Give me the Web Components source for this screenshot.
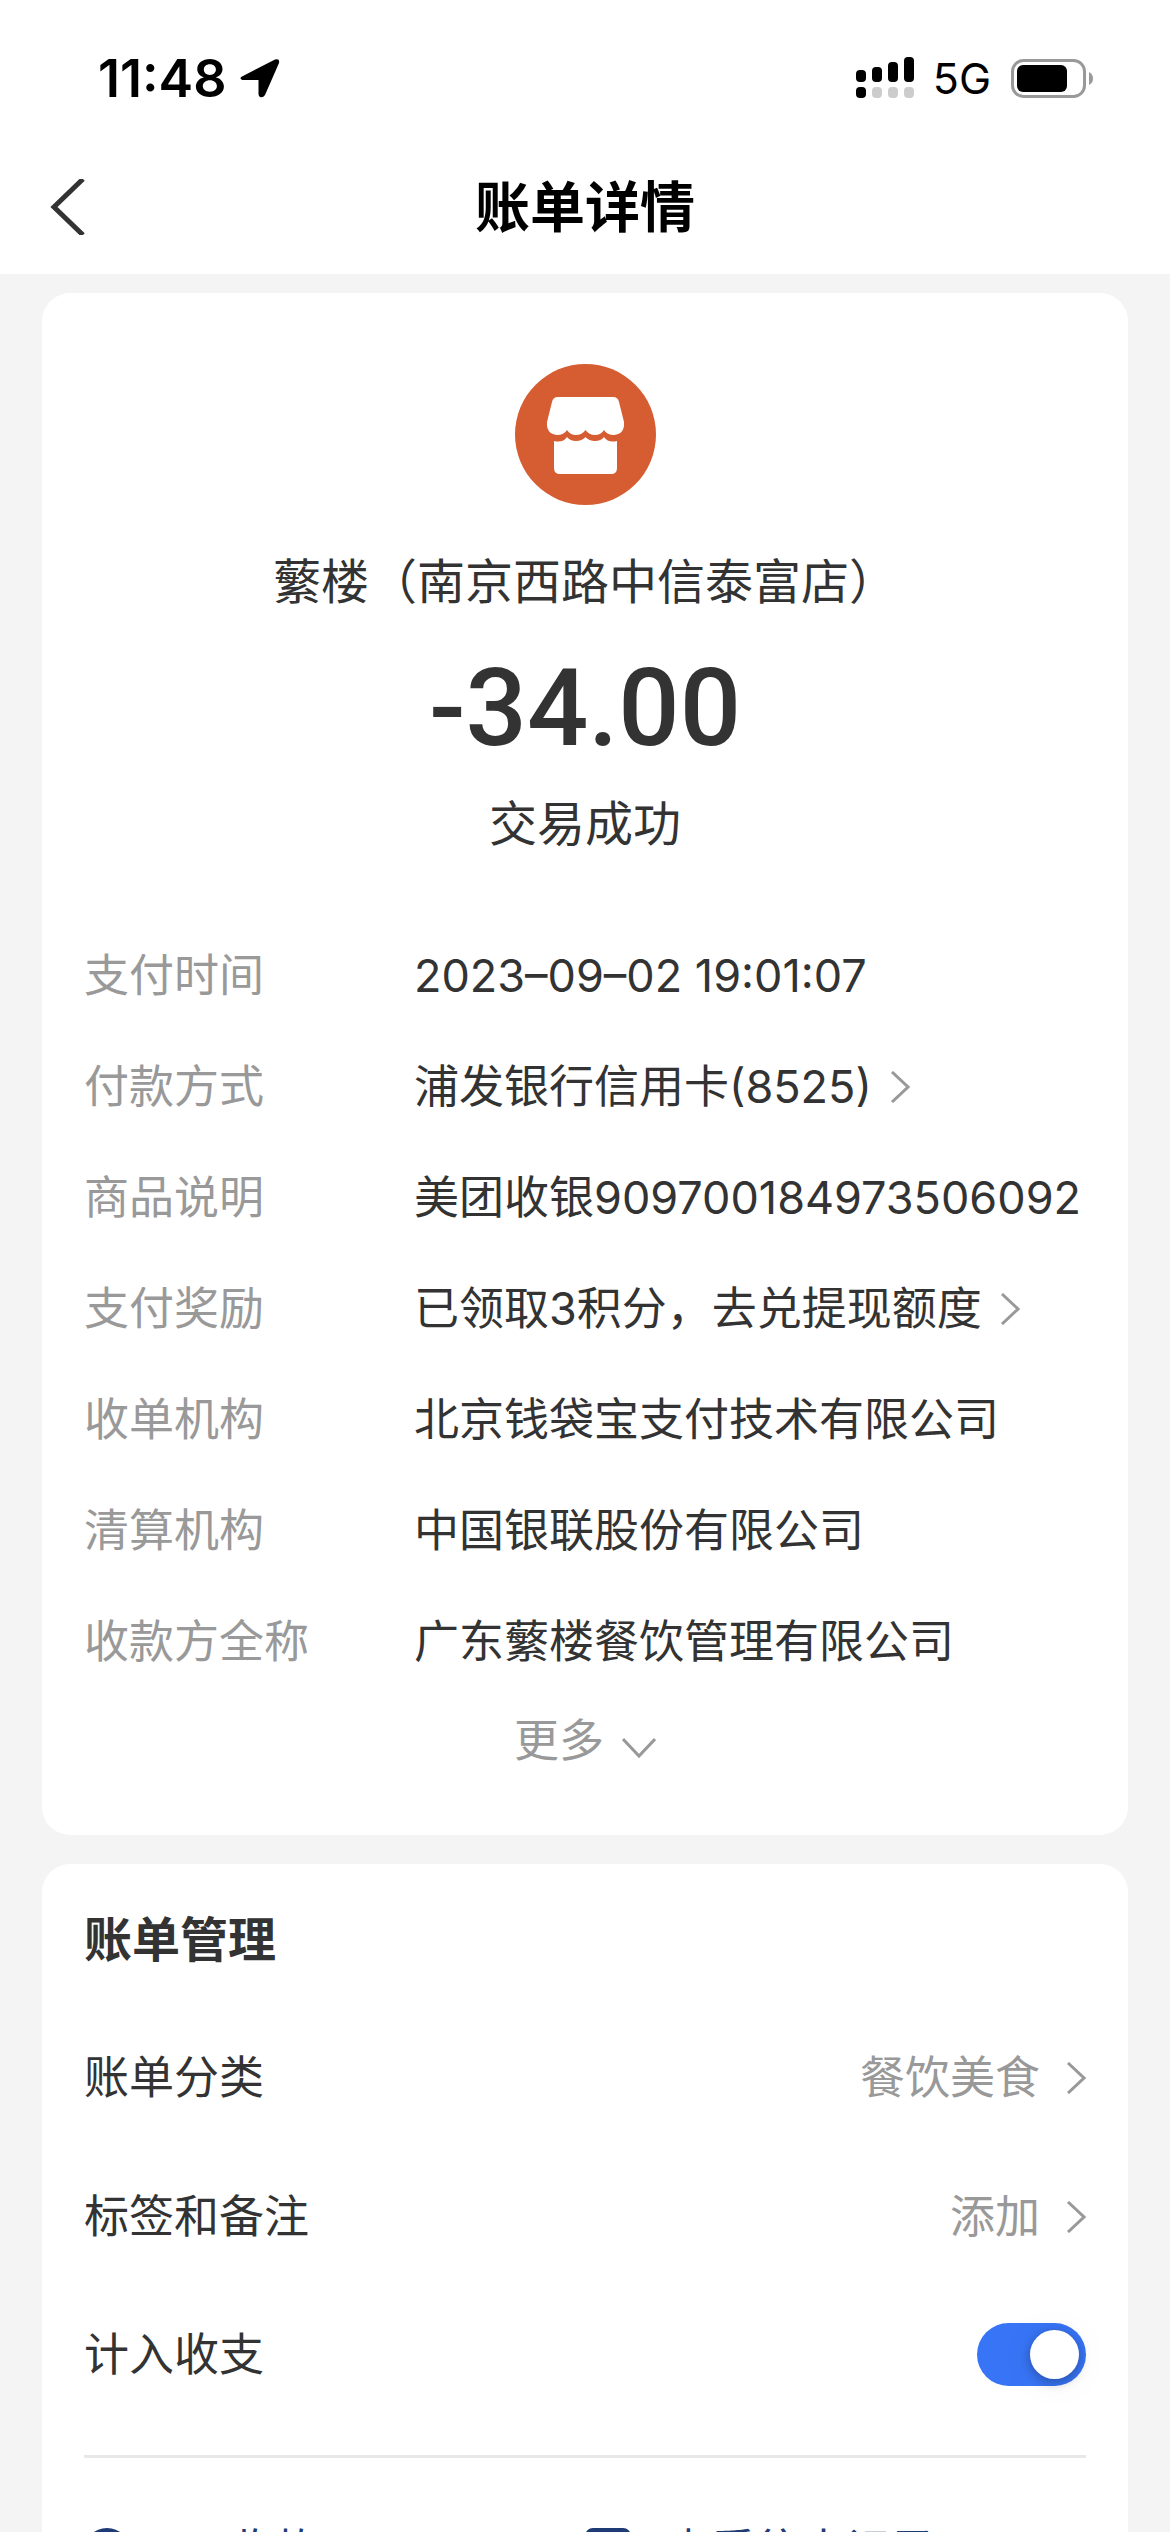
<!DOCTYPE html>
<html lang="zh-CN">
<head>
<meta charset="UTF-8">
<meta name="viewport" content="width=device-width, initial-scale=1">
<title>账单详情</title>
<style>
    body {
        margin: 0;
        background: #f4f4f4;
        color: #333;
        font-family: Inter, "Noto Sans CJK SC", sans-serif;
        font-size: 45px;
        line-height: 63px;
    }
</style>
</head>
<body>

<status-bar time="11:48" network="5G"></status-bar>
<nav-bar>账单详情</nav-bar>

<main>
    <bill-card>
        <bill-summary amount="-34.00" status="交易成功">蘩楼（南京西路中信泰富店）</bill-summary>
        <detail-row label="支付时间">2023–09–02 19:01:07</detail-row>
        <detail-row label="付款方式" link>浦发银行信用卡(8525)</detail-row>
        <detail-row label="商品说明">美团收银909700184973506092</detail-row>
        <detail-row label="支付奖励" link>已领取3积分，去兑提现额度</detail-row>
        <detail-row label="收单机构">北京钱袋宝支付技术有限公司</detail-row>
        <detail-row label="清算机构">中国银联股份有限公司</detail-row>
        <detail-row label="收款方全称">广东蘩楼餐饮管理有限公司</detail-row>
        <more-button>更多</more-button>
    </bill-card>

    <bill-card class="manage">
        <card-title>账单管理</card-title>
        <setting-row label="账单分类">餐饮美食</setting-row>
        <setting-row label="标签和备注">添加</setting-row>
        <switch-row label="计入收支" checked></switch-row>
        <action-list>
            <action-link icon="coin">AA收款</action-link>
            <action-link icon="record">查看往来记录</action-link>
        </action-list>
    </bill-card>
</main>

<script>
const chevron = `
    <svg class="chevron" width="20" height="32" viewBox="0 0 20 32" fill="none" stroke="#999" stroke-width="3" aria-hidden="true">
        <path d="M2 1 L18 16 L2 31"/>
    </svg>
`

class StatusBar extends HTMLElement {
    constructor() {
        super();
        this.shadow = this.attachShadow({ mode: 'open' })
    }

    connectedCallback() {
        const style = `
            :host {
                display: flex;
                align-items: center;
                justify-content: space-between;
                height: 156px;
                padding: 0 76px 0 98px;
                background: white;
                color: black;
            }

            .side {
                display: flex;
                align-items: center;
            }

            .time {
                font-size: 52px;
                font-weight: 600;
                margin-right: 14px;
            }

            .network {
                font-size: 43px;
                font-weight: 400;
                margin: 0 20px 0 18px;
            }

            svg {
                display: block;
            }
        `

        this.shadow.innerHTML = `
            <style>${style}</style>
            <div class="side">
                <span class="time">${this.getAttribute('time')}</span>
                <svg width="40" height="40" viewBox="0 0 40 40" aria-hidden="true">
                    <path d="M3 18 L35 1.5 Q40 0 39 5 L25 37 Q23 40 20 39 Q18.500 38 18.500 36 L18.500 22 L4 22 Q0.500 22 0.500 20 Q0.500 19 3 18 Z"/>
                </svg>
            </div>
            <div class="side">
                <svg width="59" height="42" viewBox="0 0 59 42" aria-hidden="true">
                    <rect x="0" y="13" width="10" height="12" rx="4"/>
                    <rect x="16" y="10" width="10" height="15" rx="4"/>
                    <rect x="32" y="5" width="10" height="20" rx="4"/>
                    <rect x="48" y="0" width="10" height="25" rx="4"/>
                    <rect x="0" y="30" width="10" height="11" rx="4"/>
                    <g fill="#ccc">
                        <rect x="16" y="30" width="10" height="11" rx="4"/>
                        <rect x="32" y="30" width="10" height="11" rx="4"/>
                        <rect x="48" y="30" width="10" height="11" rx="4"/>
                    </g>
                </svg>
                <span class="network">${this.getAttribute('network')}</span>
                <svg width="83" height="39" viewBox="0 0 83 39" aria-hidden="true">
                    <rect x="1.500" y="1.500" width="72" height="36" rx="11" fill="none" stroke="#999" stroke-width="3"/>
                    <rect x="6" y="6" width="50" height="27" rx="6"/>
                    <path d="M78 13 Q82 15 82 19.500 Q82 24 78 26 Z" fill="#999"/>
                </svg>
            </div>
        `;
    }
}

class NavBar extends HTMLElement {
    constructor() {
        super();
        this.shadow = this.attachShadow({ mode: 'open' })
    }

    connectedCallback() {
        const style = `
            :host {
                display: grid;
                grid-template-columns: 1fr auto 1fr;
                align-items: center;
                height: 102px;
                padding: 0 48px 16px;
                background: white;
                color: black;
            }

            button {
                justify-self: start;
                padding: 0;
                border: 0;
                background: none;
                cursor: pointer;
            }

            svg {
                display: block;
            }

            h1 {
                margin: 0;
                font-size: 55px;
                font-weight: 600;
                line-height: 72px;
            }
        `

        this.shadow.innerHTML = `
            <style>${style}</style>
            <button type="button" aria-label="返回">
                <svg width="40" height="56" viewBox="0 0 40 56" fill="none" stroke="#333" stroke-width="5">
                    <path d="M35 0 L6 28 L35 56"/>
                </svg>
            </button>
            <h1><slot></slot></h1>
        `;
    }
}

class BillCard extends HTMLElement {
    constructor() {
        super();
        this.shadow = this.attachShadow({ mode: 'open' })
    }

    connectedCallback() {
        const style = `
            :host {
                display: flex;
                flex-direction: column;
                margin: 19px 42px 29px;
                padding: 71px 42px 63px;
                border-radius: 28px;
                background: white;
            }

            :host(.manage) {
                padding-top: 40px;
            }
        `

        this.shadow.innerHTML = `
            <style>${style}</style>
            <slot></slot>
        `;
    }
}

class BillSummary extends HTMLElement {
    constructor() {
        super();
        this.shadow = this.attachShadow({ mode: 'open' })
    }

    connectedCallback() {
        const style = `
            :host {
                display: flex;
                flex-direction: column;
                align-items: center;
                margin-bottom: 84px;
                font-size: 48px;
                line-height: 72px;
            }

            .shop {
                margin-top: 41px;
            }

            .amount {
                margin: 30px 0 20px;
                font-family: Roboto, sans-serif;
                font-size: 108px;
                font-weight: 500;
                line-height: 120px;
            }

            svg {
                display: block;
            }
        `

        this.shadow.innerHTML = `
            <style>${style}</style>
            <svg width="141" height="141" viewBox="0 0 141 141" fill="white" aria-hidden="true">
                <circle cx="70.500" cy="70.500" r="70.500" fill="#d65d32"/>
                <path d="M43 33 H98 Q103 33 104 38 L109 58 Q110 70 99 71 Q92 71 89 66 Q86 71 80 71 Q74 71 70.500 66 Q67 71 61 71 Q55 71 52 66 Q49 71 42 71 Q31 70 32 58 L37 38 Q38 33 43 33 Z"/>
                <path d="M39 77 Q48 79 52 73 Q55 77 61 77 Q67 77 70.500 73 Q74 77 80 77 Q86 77 89 73 Q93 79 102 77 V104 Q102 110 96 110 H45 Q39 110 39 104 Z"/>
            </svg>
            <div class="shop"><slot></slot></div>
            <div class="amount">${this.getAttribute('amount')}</div>
            <div>${this.getAttribute('status')}</div>
        `;
    }
}

class DetailRow extends HTMLElement {
    constructor() {
        super();
        this.shadow = this.attachShadow({ mode: 'open' })
    }

    connectedCallback() {
        const style = `
            :host {
                display: grid;
                grid-template-columns: 330px 1fr;
                margin-bottom: 48px;
            }

            .label {
                color: #999;
            }

            .value {
                display: flex;
                align-items: center;
                gap: 18px;
                color: inherit;
                text-decoration: none;
                white-space: nowrap;
            }
        `
        const value = this.hasAttribute('link')
            ? `<a class="value" href="#"><slot></slot>${chevron}</a>`
            : `<span class="value"><slot></slot></span>`

        this.shadow.innerHTML = `
            <style>${style}</style>
            <span class="label">${this.getAttribute('label')}</span>
            ${value}
        `;
    }
}

class MoreButton extends HTMLElement {
    constructor() {
        super();
        this.shadow = this.attachShadow({ mode: 'open' })
    }

    connectedCallback() {
        const style = `
            :host {
                display: flex;
                justify-content: center;
                margin-top: -12px;
            }

            button {
                display: flex;
                align-items: center;
                gap: 18px;
                padding: 0;
                border: 0;
                background: none;
                color: #999;
                font: inherit;
                cursor: pointer;
            }

            svg {
                margin-top: 14px;
            }
        `

        this.shadow.innerHTML = `
            <style>${style}</style>
            <button type="button">
                <slot></slot>
                <svg width="34" height="22" viewBox="0 0 34 22" fill="none" stroke="#999" stroke-width="3" aria-hidden="true">
                    <path d="M1 2 L17 19 L33 2"/>
                </svg>
            </button>
        `;
    }
}

class CardTitle extends HTMLElement {
    constructor() {
        super();
        this.shadow = this.attachShadow({ mode: 'open' })
    }

    connectedCallback() {
        const style = `
            :host {
                display: block;
                margin-bottom: 32px;
            }

            h2 {
                margin: 0;
                font-size: 48px;
                font-weight: 700;
                line-height: 72px;
            }
        `

        this.shadow.innerHTML = `
            <style>${style}</style>
            <h2><slot></slot></h2>
        `;
    }
}

class SettingRow extends HTMLElement {
    constructor() {
        super();
        this.shadow = this.attachShadow({ mode: 'open' })
    }

    connectedCallback() {
        const style = `
            :host {
                display: block;
            }

            a {
                display: flex;
                align-items: center;
                height: 139px;
                color: inherit;
                text-decoration: none;
            }

            .value {
                margin: 0 26px 0 auto;
                color: #999;
            }
        `

        this.shadow.innerHTML = `
            <style>${style}</style>
            <a href="#">
                <span>${this.getAttribute('label')}</span>
                <span class="value"><slot></slot></span>
                ${chevron}
            </a>
        `;
    }
}

class SwitchRow extends HTMLElement {
    constructor() {
        super();
        this.shadow = this.attachShadow({ mode: 'open' })
    }

    connectedCallback() {
        const style = `
            :host {
                display: flex;
                align-items: center;
                justify-content: space-between;
                height: 137px;
            }

            input {
                appearance: none;
                display: flex;
                align-items: center;
                width: 109px;
                height: 63px;
                margin: 0;
                padding: 0 7px;
                box-sizing: border-box;
                border-radius: 32px;
                background: #ddd;
                cursor: pointer;
            }

            input::before {
                content: '';
                width: 49px;
                height: 49px;
                border-radius: 50%;
                background: white;
                box-shadow: 0 3px 12px rgba(0, 0, 0, 0.3), 0 3px 40px rgba(0, 0, 0, 0.05);
            }

            input:checked {
                justify-content: flex-end;
                background: #3875f6;
            }
        `

        this.shadow.innerHTML = `
            <style>${style}</style>
            <label for="toggle">${this.getAttribute('label')}</label>
            <input id="toggle" type="checkbox" role="switch" ${this.hasAttribute('checked') ? 'checked' : ''}>
        `;
    }
}

class ActionList extends HTMLElement {
    constructor() {
        super();
        this.shadow = this.attachShadow({ mode: 'open' })
    }

    connectedCallback() {
        const style = `
            :host {
                display: grid;
                grid-template-columns: 1fr 1fr;
                margin-top: 32px;
                padding-top: 61px;
                border-top: 3px solid #e8e8e8;
            }
        `

        this.shadow.innerHTML = `
            <style>${style}</style>
            <slot></slot>
        `;
    }
}

class ActionLink extends HTMLElement {
    constructor() {
        super();
        this.shadow = this.attachShadow({ mode: 'open' })
    }

    connectedCallback() {
        const icons = {
            coin: `
                <circle cx="23" cy="23" r="21"/>
                <path d="M14 12 L23 22 L32 12 M23 22 V36 M14 23 H32 M14 30 H32"/>
            `,
            record: `
                <rect x="2" y="2" width="42" height="42" rx="6"/>
                <path d="M12 15 H34 M12 24 H34 M12 33 H25"/>
            `
        }
        const style = `
            :host {
                display: block;
            }

            a {
                display: flex;
                align-items: center;
                gap: 35px;
                color: #1f3b76;
                text-decoration: none;
            }
        `

        this.shadow.innerHTML = `
            <style>${style}</style>
            <a href="#">
                <svg width="46" height="46" viewBox="0 0 46 46" fill="none" stroke="currentColor" stroke-width="4" aria-hidden="true">
                    ${icons[this.getAttribute('icon')]}
                </svg>
                <slot></slot>
            </a>
        `;
    }
}

customElements.define('status-bar', StatusBar);
customElements.define('nav-bar', NavBar);
customElements.define('bill-card', BillCard);
customElements.define('bill-summary', BillSummary);
customElements.define('detail-row', DetailRow);
customElements.define('more-button', MoreButton);
customElements.define('card-title', CardTitle);
customElements.define('setting-row', SettingRow);
customElements.define('switch-row', SwitchRow);
customElements.define('action-list', ActionList);
customElements.define('action-link', ActionLink);
</script>
</body>
</html>
